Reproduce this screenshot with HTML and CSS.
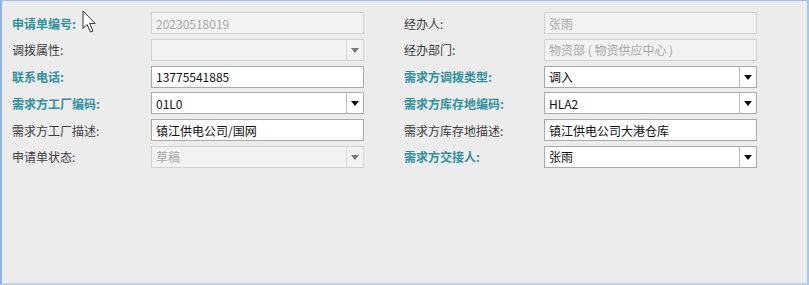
FILE: index.html
```html
<!DOCTYPE html>
<html>
<head>
    <title>申请单</title>
    <link rel="stylesheet" href="styles.css">
</head>
<body>
<div class="frame">
    <div class="form-grid">
        <div class="label key">申请单编号:</div>
        <div class="field disabled"><span class="val">20230518019</span></div>
        <div class="label">经办人:</div>
        <div class="field disabled"><span class="val">张雨</span></div>

        <div class="label">调拨属性:</div>
        <div class="field disabled select"><span class="val"></span><span class="drop"><i class="arrow"></i></span></div>
        <div class="label">经办部门:</div>
        <div class="field disabled"><span class="val">物资部 ( 物资供应中心 )</span></div>

        <div class="label key">联系电话:</div>
        <div class="field"><span class="val">13775541885</span></div>
        <div class="label key">需求方调拨类型:</div>
        <div class="field select"><span class="val">调入</span><span class="drop"><i class="arrow"></i></span></div>

        <div class="label key">需求方工厂编码:</div>
        <div class="field select"><span class="val">01L0</span><span class="drop"><i class="arrow"></i></span></div>
        <div class="label key">需求方库存地编码:</div>
        <div class="field select"><span class="val">HLA2</span><span class="drop"><i class="arrow"></i></span></div>

        <div class="label">需求方工厂描述:</div>
        <div class="field"><span class="val">镇江供电公司/国网</span></div>
        <div class="label">需求方库存地描述:</div>
        <div class="field"><span class="val">镇江供电公司大港仓库</span></div>

        <div class="label">申请单状态:</div>
        <div class="field disabled select"><span class="val">草稿</span><span class="drop"><i class="arrow"></i></span></div>
        <div class="label key">需求方交接人:</div>
        <div class="field select"><span class="val">张雨</span><span class="drop"><i class="arrow"></i></span></div>
    </div>
    <svg class="cursor" width="16" height="24" viewBox="0 0 16 24">
        <path d="M1 1 L1 18.5 L5 14.5 L8.5 22 L11 21 L7.6 13.4 L13.2 13.4 Z" fill="#fff" stroke="#333" stroke-width="1" stroke-linejoin="round"/>
    </svg>
</div>
</body>
</html>
```
FILE: styles.css
```css
html, body {
    margin: 0;
    padding: 0;
}

body {
    width: 809px;
    height: 285px;
    font-family: "Noto Sans CJK SC", "Noto Sans", sans-serif;
    font-size: 12px;
    background-color: #ececec;
}

.frame {
    position: relative;
    box-sizing: border-box;
    width: 809px;
    height: 285px;
    border-top: 1px solid #a3c1e8;
    border-left: 2px solid #8db3e2;
    border-right: 2px solid #aac6ea;
    border-bottom: 2px solid #b9cfea;
    background-color: #ececec;
    padding: 11px 0 0 10px;
}

.form-grid {
    display: grid;
    grid-template-columns: 139px 213px 40px 140px 213px;
    grid-auto-rows: 22px;
    row-gap: 4.8px;
}

.form-grid .label:nth-child(4n+3) {
    grid-column: 4;
}

.label {
    display: flex;
    align-items: center;
    color: #3c3c3c;
    white-space: nowrap;
}

.label.key {
    color: #2f919e;
    font-weight: bold;
}

.field {
    display: flex;
    align-items: stretch;
    box-sizing: border-box;
    border: 1px solid #a9a9a9;
    background-color: #fff;
    color: #111;
}

.field.disabled {
    border-color: #d2d2d2;
    background-color: #f2f2f2;
    color: #a8a8a8;
}

.val {
    flex: 1;
    display: flex;
    align-items: center;
    padding-left: 4px;
    white-space: nowrap;
    overflow: hidden;
}

.drop {
    width: 16px;
    border-left: 1px solid #bdbdbd;
    display: flex;
    align-items: center;
    justify-content: center;
}

.field.disabled .drop {
    border-left-color: #dadada;
}

.arrow {
    width: 0;
    height: 0;
    border-left: 4px solid transparent;
    border-right: 4px solid transparent;
    border-top: 5px solid #111;
    margin-top: 1px;
}

.field.disabled .arrow {
    border-top-color: #777;
}

.cursor {
    position: absolute;
    left: 80px;
    top: 9px;
}
```
